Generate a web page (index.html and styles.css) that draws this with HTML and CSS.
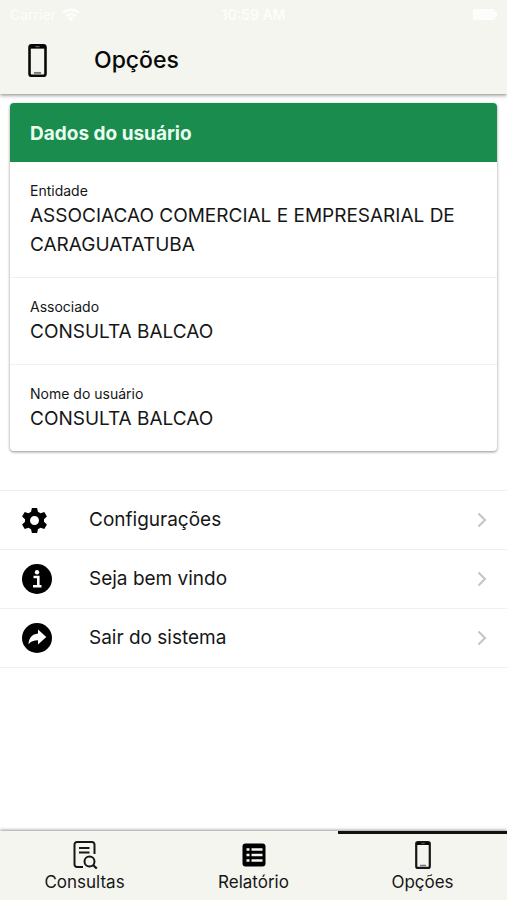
FILE: index.html
```html
<!DOCTYPE html>
<html lang="pt-BR">
<head>
<meta charset="utf-8">
<meta name="viewport" content="width=device-width, initial-scale=1">
<title>Opções</title>
<link rel="stylesheet" href="styles.css">
</head>
<body>
<svg class="defs" aria-hidden="true">
  <symbol id="phone" viewBox="0 0 18 32">
    <rect x="1.25" y="1.25" width="15.5" height="29.5" rx="2" fill="none" stroke="currentColor" stroke-width="2.5"/>
    <path d="M2 2h14v2.500H2z"/>
    <path d="M7 2.600h4" stroke="#777" stroke-width="1"/>
    <path d="M5.500 28h7" stroke="#777" stroke-width="1.800"/>
  </symbol>
  <symbol id="chevron" viewBox="0 0 10 16">
    <path d="M1.500 1.500L8 8l-6.500 6.500" fill="none" stroke="currentColor" stroke-width="2"/>
  </symbol>
</svg>
<header class="top">
  <div class="status">
    <span class="carrier">Carrier
      <svg class="wifi" viewBox="0 0 18 13"><path d="M1 5a11.500 11.500 0 0 1 16 0M4 8a7.200 7.200 0 0 1 10 0" fill="none" stroke="currentColor" stroke-width="2.400"/><path d="M9 13L6 10a4.500 4.500 0 0 1 6 0z" fill="currentColor"/></svg>
    </span>
    <span class="clock">10:59 AM</span>
    <span class="power"><svg class="battery" viewBox="0 0 24 11"><rect width="22" height="11" rx="2" fill="currentColor"/><path d="M23 3v5" stroke="currentColor" stroke-width="2"/></svg></span>
  </div>
  <div class="titlebar">
    <svg class="title-icon" aria-hidden="true"><use href="#phone"/></svg>
    <h1>Opções</h1>
  </div>
</header>
<main>
  <section class="card">
    <h2>Dados do usuário</h2>
    <dl>
      <div class="field"><dt>Entidade</dt><dd>ASSOCIACAO COMERCIAL E EMPRESARIAL DE CARAGUATATUBA</dd></div>
      <div class="field"><dt>Associado</dt><dd>CONSULTA BALCAO</dd></div>
      <div class="field"><dt>Nome do usuário</dt><dd>CONSULTA BALCAO</dd></div>
    </dl>
  </section>
  <div class="menu">
    <button class="item" type="button">
      <span class="slot"><svg class="gear" viewBox="0 0 24 24" aria-hidden="true"><path fill-rule="evenodd" d="M9.500 0h5l.8 3.600 2.500 1.500 3.600-1.300 2.500 4.400-2.800 2.500v2.600l2.800 2.500-2.500 4.400-3.600-1.300-2.500 1.500-.8 3.600h-5l-.8-3.600-2.500-1.500-3.600 1.300L.1 15.800l2.800-2.500v-2.600L.1 8.200l2.500-4.400 3.600 1.300 2.500-1.500zM12 7.700a4.300 4.300 0 1 0 0 8.600 4.300 4.300 0 0 0 0-8.600z"/></svg></span>
      <span class="label">Configurações</span>
      <svg class="chevron" aria-hidden="true"><use href="#chevron"/></svg>
    </button>
    <button class="item" type="button">
      <span class="slot"><svg class="round" viewBox="0 0 30 30" aria-hidden="true"><circle cx="15" cy="15" r="15"/><circle cx="15" cy="8.300" r="2.200" fill="#fff"/><path d="M11.500 13h4.800v9M11 22.200h8.500" fill="none" stroke="#fff" stroke-width="2.600"/></svg></span>
      <span class="label">Seja bem vindo</span>
      <svg class="chevron" aria-hidden="true"><use href="#chevron"/></svg>
    </button>
    <button class="item" type="button">
      <span class="slot"><svg class="round" viewBox="0 0 30 30" aria-hidden="true"><circle cx="15" cy="15" r="15"/><path d="M16 6.500l8.300 7.500-8.300 7.500v-4.300c-4.500 0-7 1-9.500 4 .4-5.800 3.500-10 9.500-10.600z" fill="#fff"/></svg></span>
      <span class="label">Sair do sistema</span>
      <svg class="chevron" aria-hidden="true"><use href="#chevron"/></svg>
    </button>
  </div>
</main>
<nav class="tabs">
  <a class="tab" href="#consultas">
    <svg class="tab-icon" viewBox="0 0 28 28" aria-hidden="true"><path d="M23.500 13V3.500a2.500 2.500 0 0 0-2.500-2.500H6A2.500 2.500 0 0 0 3.500 3.500v20A2.500 2.500 0 0 0 6 26H12M8 7H18.500M8 11.500H18.500" fill="none" stroke="currentColor" stroke-width="2"/><circle cx="18.500" cy="20.500" r="5" fill="none" stroke="currentColor" stroke-width="2"/><path d="M22 24l3.800 3.600" stroke="currentColor" stroke-width="2.200"/></svg>
    <span>Consultas</span>
  </a>
  <a class="tab" href="#relatorio">
    <svg class="tab-icon" viewBox="0 0 28 28" aria-hidden="true"><rect x="2.500" y="2.500" width="23" height="23" rx="3"/><path d="M6.500 8.500h3M6.500 14h3M6.500 19.500h3M11.500 8.500H22.500M11.500 14H22.500M11.500 19.500H22.500" stroke="#f4f5ef" stroke-width="2.400"/></svg>
    <span>Relatório</span>
  </a>
  <a class="tab active" href="#opcoes" aria-current="page">
    <svg class="tab-icon" aria-hidden="true"><use href="#phone"/></svg>
    <span>Opções</span>
  </a>
</nav>
</body>
</html>
```
FILE: styles.css
```css
* { box-sizing: border-box; }
body {
  margin: 0;
  min-height: 100vh;
  display: flex;
  flex-direction: column;
  background: #fff;
  color: #161616;
  font-family: Inter, "Liberation Sans", sans-serif;
}
h1, h2, dl, dd { margin: 0; font-weight: 400; }
.defs { display: none; }
.top {
  background: #f4f5ef;
  box-shadow: 0 1px 4px rgba(0, 0, 0, .5);
}
.status {
  display: grid;
  grid-template-columns: 1fr auto 1fr;
  align-items: center;
  height: 28px;
  padding: 0 10px;
  color: #fdfdfb;
  font-size: 14px;
}
.clock { font-weight: 600; }
.carrier { display: flex; align-items: center; gap: 6px; }
.wifi { width: 18px; height: 13px; }
.power { justify-self: end; display: flex; }
.battery { width: 24px; height: 11px; }
.titlebar {
  display: flex;
  align-items: center;
  gap: 47px;
  padding: 15px 28px 17px;
  color: #080808;
}
.title-icon { width: 19px; height: 33px; }
h1 { font-size: 23px; line-height: 34px; font-weight: 500; }
main { flex: 1; }
.card {
  margin: 9px 10px 0;
  border-radius: 4px;
  overflow: hidden;
  background: #fff;
  box-shadow: 0 1px 3px rgba(0, 0, 0, .45);
}
h2 {
  padding: 15px 20px 13px;
  background: #1a8c4e;
  color: #e9fff0;
  font-size: 19px;
  line-height: 31px;
  font-weight: 700;
}
.field { padding: 20px 20px 18px; }
.field + .field { border-top: 1px solid #f0f0f0; }
dt { margin-bottom: 1px; font-size: 14px; line-height: 18px; }
dd { font-size: 19px; line-height: 29px; }
.menu { margin-top: 39px; border-top: 1px solid #f0f0f0; }
.item {
  display: flex;
  align-items: center;
  width: 100%;
  padding: 0 20px 0 22px;
  border: 0;
  border-bottom: 1px solid #f0f0f0;
  background: none;
  color: inherit;
  font: inherit;
  font-size: 19px;
  line-height: 58px;
  text-align: left;
}
.slot { display: flex; width: 67px; }
.gear { width: 25px; height: 25px; }
.round { width: 30px; height: 30px; }
.label { flex: 1; }
.chevron { width: 10px; height: 16px; color: #c4c4c4; }
.tabs {
  display: grid;
  grid-template-columns: repeat(3, 1fr);
  background: #f4f5ef;
  box-shadow: 0 -1px 3px rgba(0, 0, 0, .4);
}
.tab {
  display: flex;
  flex-direction: column;
  align-items: center;
  padding: 7px 0 5px;
  border-top: 3px solid transparent;
  color: #161616;
  font-size: 17px;
  line-height: 26px;
  text-decoration: none;
}
.active { border-color: #111; }
.tab-icon { width: 28px; height: 28px; }
```
